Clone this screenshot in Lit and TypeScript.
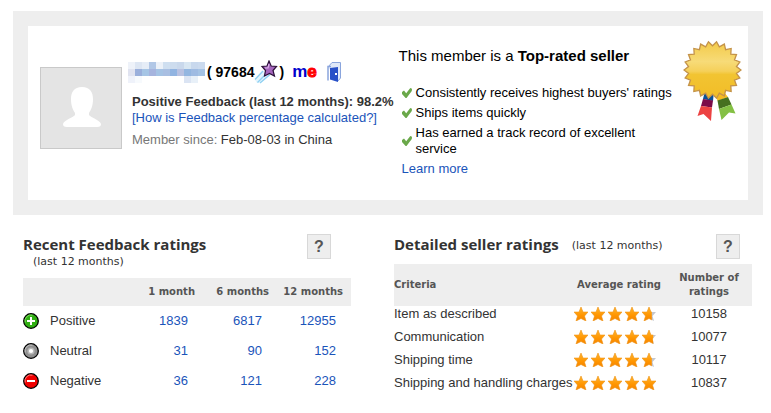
import { LitElement, html, svg, css } from "lit";
import { customElement, property } from "lit/decorators.js";

const STAR_POINTS = "7,0 9,5 14,5 10.5,9 12,14 7,11.5 2,14 3.5,9 0,5 5,5";

/** Mosaic cells that hide the member's user name, one row per line. */
const MOSAIC = [
  ["#eef2f9", "#dde6f3", "#e6edf7", "#b1c7e6", "#ecf1f8", "#cfdff0", "#cddcee", "#c9d8ec", "#d8e6f2", "#c8d8ed", "#cbdaee"],
  ["#e0e3f0", "#9aafdb", "#a6c5e5", "#a6b4de", "#a5c3e4", "#a9bfe2", "#91b4e1", "#b8c1e1", "#93b6e0", "#9fbbe2", "#a5c3e4"],
  ["#eff2fa", "#f7fafd", "", "", "", "", "", "", "#dbe4f3", "#e8f0f8", ""],
];

function burst(cx: number, cy: number, outer: number, inner: number, spikes: number): string {
  const points: string[] = [];
  for (let i = 0; i < spikes * 2; i++) {
    const r = i % 2 ? inner : outer;
    const a = (Math.PI * (i + 1)) / spikes - Math.PI / 2;
    points.push(`${(cx + r * Math.cos(a)).toFixed(2)},${(cy + r * Math.sin(a)).toFixed(2)}`);
  }
  return points.join(" ");
}

@customElement("star-rating")
class StarRating extends LitElement {
  @property({ type: Number }) value = 5;

  static styles = css`
    :host { display: flex; gap: 3px; }
    svg { display: block; width: 14px; height: 14px; }
  `;

  render() {
    return [0, 1, 2, 3, 4].map((i) => {
      const fill = Math.max(0, Math.min(1, this.value - i));
      return html`<svg viewBox="0 0 14 14" aria-hidden="true">
        <defs>
          <linearGradient id="tone${i}" x1="0" y1="0" x2="0" y2="1">
            <stop offset="0" stop-color="#ffb52e" />
            <stop offset=".6" stop-color="#ff9500" />
            <stop offset="1" stop-color="#f58300" />
          </linearGradient>
          <clipPath id="part${i}"><rect width=${14 * fill} height="14" /></clipPath>
        </defs>
        <polygon points=${STAR_POINTS} fill="#c4c6cc" />
        <polygon points=${STAR_POINTS} fill="url(#tone${i})" stroke="#f79a1c" stroke-width=".6" clip-path="url(#part${i})" />
      </svg>`;
    });
  }
}

@customElement("feedback-icon")
class FeedbackIcon extends LitElement {
  @property() kind = "positive";

  static styles = css`
    :host { display: block; }
    svg { display: block; width: 16px; height: 16px; }
  `;

  render() {
    const tones: Record<string, string[]> = {
      positive: ["#2fae12", "#7fe05e"],
      neutral: ["#8f8f8f", "#c4c4c4"],
      negative: ["#f00000", "#ff8080"],
    };
    const [base, light] = tones[this.kind];
    return html`<svg viewBox="0 0 16 16" aria-hidden="true">
      <circle cx="8" cy="8" r="7.3" fill=${base} stroke="#000" stroke-width="1.3" />
      <path d="M2.2 9.5A5.9 5.9 0 0 1 9.500 2.200" fill="none" stroke=${light} stroke-width="1" />
      ${this.kind === "positive" ? svg`<path d="M8 4v8M4 8h8" stroke="#fff" stroke-width="2" />` : ""}
      ${this.kind === "negative" ? svg`<path d="M4 8h8" stroke="#fff" stroke-width="2" />` : ""}
      ${this.kind === "neutral"
        ? svg`<circle cx="8" cy="8" r="3.6" fill="#b8b8b8" /><circle cx="8" cy="8" r="2.1" fill="#fff" />`
        : ""}
    </svg>`;
  }
}

@customElement("app-root")
class AppRoot extends LitElement {
  static styles = css`
    :host {
      display: block;
      background: #fff;
      color: #333;
      font: 13px/16px "Liberation Sans", Arial, sans-serif;
      padding: 11px 8px 0 13px;
    }
    svg { display: block; flex: none; }
    a { color: #1a54ba; text-decoration: none; }
    h1, h2, p, ul { margin: 0; padding: 0; font-weight: normal; }

    .profile { background: #eee; padding: 15px; }
    .card {
      display: flex;
      align-items: flex-start;
      background: #fff;
      padding: 14px 6px 23px 12px;
    }
    .avatar { margin: 27px 6px 0 0; }
    .member { flex: 0 0 265px; margin: 20px 5px 0 0; }
    .name-row { display: flex; align-items: center; height: 24px; color: #000; font-size: 14px; font-weight: bold; }
    .mosaic { margin-right: 2px; }
    .me { margin: 0 10px 0 8px; font-size: 17px; color: #00c; }
    .me span { color: #f00; -webkit-text-stroke: 1px #f00; }
    .facts { padding: 10px 0 0 4px; white-space: nowrap; }
    .since { margin-top: 6px; }
    .muted { color: #777; }

    .status { flex: 1; min-width: 0; margin-right: 9px; color: #000; }
    .status h1 { font-size: 15px; line-height: 20px; margin-top: 6px; }
    .perks { display: grid; gap: 4px; list-style: none; margin: 19px 0 4px 3px; }
    .perks li { display: flex; align-items: center; gap: 4px; }
    .more { margin-left: 3px; }

    .ratings {
      display: grid;
      grid-template-columns: 328fr 358fr;
      column-gap: 43px;
      padding: 19px 11px 0 10px;
      align-items: start;
    }
    .head { display: flex; align-items: flex-start; }
    .head h2 { font: bold 15px/20px "Open Sans", "Noto Sans", sans-serif; white-space: nowrap; }
    .small { font: 11px/16px "DejaVu Sans", Verdana, sans-serif; white-space: nowrap; }
    .recent .head { height: 44px; padding-right: 20px; justify-content: space-between; }
    .recent .small { margin-left: 10px; }
    .detailed .head { height: 30px; padding-right: 12px; }
    .detailed .small { margin: 4px auto 0 13px; }
    .help {
      width: 24px;
      height: 25px;
      padding: 0;
      border: 1px solid #d8d8d8;
      background: #eee;
      color: #555;
      font: bold 16px/22px "Liberation Sans", Arial, sans-serif;
    }

    table { width: 100%; border-collapse: collapse; table-layout: fixed; }
    th, td { padding: 0; text-align: left; font-weight: normal; }
    thead { background: #eee; }
    thead th { font: bold 10px/14px "DejaVu Sans", Verdana, sans-serif; color: #555; white-space: nowrap; }
    .recent thead th { height: 28px; text-align: right; padding-right: 8px; }
    .recent tbody th, .recent tbody td { height: 30px; }
    .recent td { text-align: right; padding-right: 15px; }
    .recent col.num { width: 74px; }
    .kind { display: flex; align-items: center; gap: 11px; }
    .detailed thead th { height: 42px; }
    .detailed tbody th, .detailed tbody td { height: 23px; vertical-align: top; white-space: nowrap; }
    .detailed .mid { text-align: center; }
    .detailed col.avg { width: 94px; }
    .detailed col.count { width: 86px; }
    star-rating { padding: 1px 0 0 2px; }
  `;

  private check() {
    return html`<svg width="10" height="10" viewBox="0 0 10 10" aria-hidden="true">
      <path d="M0 4 2 2.500 4.200 5.200 8.300 0 10 .8 9.800 3 4.500 10 3.600 10 0 6z" fill="#6aa84a" />
    </svg>`;
  }

  private medal() {
    return html`<svg width="59" height="82" viewBox="0 0 59 82" aria-hidden="true">
      <defs>
        <linearGradient id="gold" x1="0" y1="0" x2="0" y2="1">
          <stop offset="0" stop-color="#f3ca48" />
          <stop offset=".35" stop-color="#f7db78" />
          <stop offset=".52" stop-color="#f5d05a" />
          <stop offset=".58" stop-color="#f2c432" />
          <stop offset="1" stop-color="#f2bd27" />
        </linearGradient>
      </defs>
      <path d="M22 51H31L30 61 20 59z" fill="#0b5096" />
      <path d="M20 59 30 60.500 29 67.500 18 66z" fill="#7b0a48" />
      <path d="M18 66 29 67.500 28 81 20.500 74 14.500 76z" fill="#ec4242" />
      <path d="M33 55 41 52 45 57 34.500 61z" fill="#f6bb20" />
      <path d="M34.500 60.500 45 57 48.500 64.500 36 69z" fill="#467020" />
      <path d="M36 69 48.500 64.500 52.500 73.500 46 72.500 38.500 80z" fill="#84c044" />
      <polygon points=${burst(29.5, 30, 28.5, 24.2, 22)} fill="url(#gold)" stroke="#c4934a" stroke-width="1.3" />
    </svg>`;
  }

  private helpButton() {
    return html`<button class="help" type="button" aria-label="Help">?</button>`;
  }

  render() {
    const recent = [
      ["positive", "Positive", "1839", "6817", "12955"],
      ["neutral", "Neutral", "31", "90", "152"],
      ["negative", "Negative", "36", "121", "228"],
    ];
    const detailed: [string, number, string][] = [
      ["Item as described", 4.7, "10158"],
      ["Communication", 4.8, "10077"],
      ["Shipping time", 4.7, "10117"],
      ["Shipping and handling charges", 5, "10837"],
    ];
    return html`
      <section class="profile">
        <div class="card">
          <svg class="avatar" width="82" height="82" viewBox="0 0 82 82" role="img" aria-label="Member photo">
            <rect x=".5" y=".5" width="81" height="81" fill="#e4e4e4" stroke="#c9c9c9" />
            <path d="M42 20c8 0 11 5 11 12 0 7-2 11-4 14v2c1 2 11 5 12 9 0 2-1 3-4 3H27c-3 0-4-1-4-3 1-4 11-7 12-9v-2c-2-3-4-7-4-14 0-7 3-12 11-12z" fill="#fff" />
          </svg>
          <div class="member">
            <div class="name-row">
              <svg class="mosaic" width="77" height="21" shape-rendering="crispEdges" role="img" aria-label="Hidden user name">
                ${MOSAIC.map((row, y) =>
                  row.map((c, x) => (c ? svg`<rect x=${x * 7} y=${y * 7} width="7" height="7" fill=${c} />` : "")))}
              </svg>
              <span>( 97684</span>
              <svg width="25" height="24" viewBox="0 0 25 24" aria-hidden="true">
                <path d="M9 11 1 20 3 23 7 22 16 15z" fill="#e4f5fd" />
                <path d="M9 11 1 19.500M16 14.500 6 23M12 14 3.500 22.500" stroke="#8fd0f2" stroke-width="1.400" />
                <path d="M15 1 17.200 6 22.500 6.500 19 10.500 20.500 16 15.500 13.500 10.500 16 11.500 10.500 8 6.500 13 6z" fill="#a566bd" stroke="#2b1038" stroke-width="1.200" />
                <path d="M15 4 14 8 11 8" fill="none" stroke="#dcb0ea" stroke-width="1.200" />
              </svg>
              <span>)</span>
              <span class="me">m<span>e</span></span>
              <svg width="14" height="20" viewBox="0 0 14 20" aria-hidden="true">
                <path d="M1 5 5 .5H13.500V16L11 19" fill="#dfe8f8" stroke="#8aa5dd" />
                <path d="M1 18.500V4.500H4" fill="none" stroke="#8aa5dd" stroke-width="1.500" />
                <path d="M3 6 11 5V20L3 17.500z" fill="#2850c8" />
                <rect x="8" y="11" width="2" height="2" fill="#fff" />
              </svg>
            </div>
            <div class="facts">
              <p><b>Positive Feedback (last 12 months): 98.2%</b></p>
              <p><a href="#calculated">[How is Feedback percentage calculated?]</a></p>
              <p class="since"><span class="muted">Member since:</span> Feb-08-03 in China</p>
            </div>
          </div>
          <div class="status">
            <h1>This member is a <b>Top-rated seller</b></h1>
            <ul class="perks">
              <li>${this.check()}<span>Consistently receives highest buyers' ratings</span></li>
              <li>${this.check()}<span>Ships items quickly</span></li>
              <li>${this.check()}<span>Has earned a track record of excellent service</span></li>
            </ul>
            <a class="more" href="#more">Learn more</a>
          </div>
          ${this.medal()}
        </div>
      </section>

      <div class="ratings">
        <section class="recent">
          <div class="head">
            <div>
              <h2>Recent Feedback ratings</h2>
              <p class="small">(last 12 months)</p>
            </div>
            ${this.helpButton()}
          </div>
          <table aria-label="Recent Feedback ratings">
            <colgroup><col /><col class="num" /><col class="num" /><col class="num" /></colgroup>
            <thead>
              <tr><th></th><th scope="col">1 month</th><th scope="col">6 months</th><th scope="col">12 months</th></tr>
            </thead>
            <tbody>
              ${recent.map(([kind, label, ...counts]) => html`<tr>
                <th scope="row"><div class="kind"><feedback-icon kind=${kind}></feedback-icon>${label}</div></th>
                ${counts.map((n) => html`<td><a href="#${kind}">${n}</a></td>`)}
              </tr>`)}
            </tbody>
          </table>
        </section>

        <section class="detailed">
          <div class="head">
            <h2>Detailed seller ratings</h2>
            <p class="small">(last 12 months)</p>
            ${this.helpButton()}
          </div>
          <table aria-label="Detailed seller ratings">
            <colgroup><col /><col class="avg" /><col class="count" /></colgroup>
            <thead>
              <tr>
                <th scope="col">Criteria</th>
                <th scope="col" class="mid">Average rating</th>
                <th scope="col" class="mid">Number of<br />ratings</th>
              </tr>
            </thead>
            <tbody>
              ${detailed.map(([label, value, count]) => html`<tr>
                <th scope="row">${label}</th>
                <td><star-rating .value=${value} role="img" aria-label="${value} out of 5 stars"></star-rating></td>
                <td class="mid">${count}</td>
              </tr>`)}
            </tbody>
          </table>
        </section>
      </div>
    `;
  }
}
